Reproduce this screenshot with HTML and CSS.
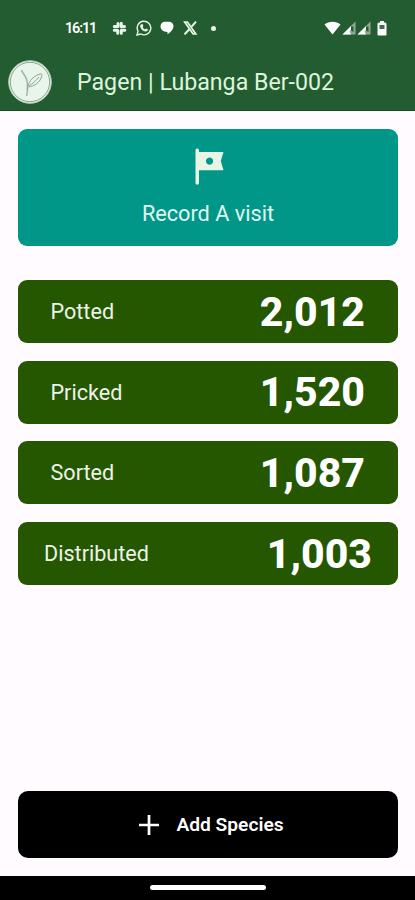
FILE: index.html
```html
<!DOCTYPE html>
<html lang="en">
<head>
  <meta charset="UTF-8" />
  <meta name="viewport" content="width=device-width, initial-scale=1.0"/>
  <title>Pagen | Lubanga Ber-002</title>
  <link rel="stylesheet" href="styles.css">
</head>
<body>
<header>
  <div class="status">
    <span class="time">16:11</span>
    <div class="notifications">
      <svg width="15" height="15" viewBox="0 0 15 15" fill="none" stroke="#e8f5e9" stroke-width="3" stroke-linecap="round">
        <path d="M6 2.500v2.500M2.300 5.600h3.700M9.300 2.300v3.500M9.500 5.600h3M2.300 9.200h3M5.700 9.500v2.800M9.300 9.600v2.700M9.300 9.300h3.500"/>
      </svg>
      <svg width="16" height="16" viewBox="0 0 16 16">
        <path d="M1 15l1-3.800A6.800 6.800 0 1 1 4.800 14z" fill="none" stroke="#e8f5e9" stroke-width="1.400"/>
        <path d="M5.400 4.200l1.200-.1.8 2-.8 1c.6 1.200 1.300 1.800 2.400 2.300l.9-1 2 .9c0 1.600-1 2.200-2.200 2.200-2.600-.2-5.400-3-5.500-5.300 0-.9.5-1.700 1.200-2z" fill="#e8f5e9"/>
      </svg>
      <svg width="14" height="14" viewBox="0 0 14 14" fill="#fff">
        <path d="M5 .8h4a4.500 4.500 0 0 1 4.500 4.500c0 3-2.500 5.700-6 8v-2.300C3 11 .5 8.500 .5 5.300A4.500 4.500 0 0 1 5 .8z"/>
      </svg>
      <svg width="15" height="14" viewBox="0 0 15 14" fill="none" stroke="#e8f5e9">
        <path d="M1.700 1h2.700l8.400 12h-2.700z" stroke-width="1.700"/>
        <path d="M13 .7L8.600 5.700M6.300 8.200L1.500 13.400" stroke-width="2"/>
      </svg>
      <span class="dot"></span>
    </div>
    <div class="signals">
      <svg width="17" height="14" viewBox="0 0 17 14" fill="#fff"><path d="M.5 3.500C5-.2 12-.2 16.500 3.500L8.500 13.500z"/></svg>
      <svg width="14" height="14" viewBox="0 0 14 14"><path d="M.5 13.500L13.500.5v13z" fill="#8fac93"/><path d="M.5 13.500L9 5v3.500l-1.500 2 1.500 3z" fill="#fff"/><path d="M9 5.500h2.500V11L9 9.500z" fill="#245c32"/></svg>
      <svg width="14" height="14" viewBox="0 0 14 14"><path d="M.5 13.500L13.500.5v13z" fill="#8fac93"/><path d="M.5 13.500L9 5v3.500l-1.500 2 1.500 3z" fill="#fff"/><path d="M9 5.500h2.500V11L9 9.500z" fill="#245c32"/></svg>
      <svg class="battery" width="10" height="15" viewBox="0 0 10 15"><path d="M3 0h4v1.500h1a1.500 1.500 0 0 1 1.500 1.500v10.500a1 1 0 0 1-1 1h-7a1 1 0 0 1-1-1V3A1.500 1.500 0 0 1 2 1.500h1z" fill="#fff"/><path d="M2.500 4h5v4h-5z" fill="#3c6e48"/></svg>
    </div>
  </div>
  <div class="title-bar">
    <svg class="logo" width="44" height="44" viewBox="0 0 44 44" fill="none">
      <circle cx="22" cy="22" r="21.300" fill="#e9f5ea" stroke="#b5cdb8"/>
      <circle cx="22" cy="22" r="19.700" stroke="#7d9c83" stroke-width=".9"/>
      <path d="M13.500 10c1 4 5 6 5.500 11 .4 5 1.500 8-.3 15" stroke="#a3b5a6" stroke-width="1.500"/>
      <path d="M19 30c1-7 4-13 13-16 2-.5 2.500 1 1.500 3-2 6-7 9-13 10M20.500 26c4-2 7-5 10.500-9" stroke="#8ca392" stroke-width="1"/>
    </svg>
    <h1>Pagen | Lubanga Ber-002</h1>
  </div>
</header>
<main>
  <div class="visit">
    <svg width="30" height="38" viewBox="0 0 30 38" fill="#e8f5e4">
      <path fill-rule="evenodd" d="M2.200.500A1.700 1.700 0 0 1 4 2.200V4h24.500l-2.700 9 2.700 9.200H4V35a1.700 1.700 0 0 1-3.500 0V2.200A1.700 1.700 0 0 1 2.200.500zM14.500 9.500a3.600 3.600 0 1 0 .1 0z"/>
    </svg>
    <span>Record A visit</span>
  </div>
  <div class="stats">
    <div class="stat"><span>Potted</span><strong>2,012</strong></div>
    <div class="stat"><span>Pricked</span><strong>1,520</strong></div>
    <div class="stat"><span>Sorted</span><strong>1,087</strong></div>
    <div class="stat wide"><span>Distributed</span><strong>1,003</strong></div>
  </div>
  <div class="add">
    <svg width="20" height="20" viewBox="0 0 20 20" stroke="#fff" stroke-width="2.700"><path d="M10 0v20M0 10h20"/></svg>
    <span>Add Species</span>
  </div>
</main>
<footer><div class="handle"></div></footer>
</body>
</html>
```

FILE: styles.css
```css
body {
  margin: 0;
  height: 900px;
  display: flex;
  flex-direction: column;
  font-family: Roboto, sans-serif;
  background: #fffbff;
  color: #fff;
  overflow: hidden;
}
header {
  height: 111px;
  box-sizing: border-box;
  background: #245c32;
  border-bottom: 1px solid #12491d;
}
.status {
  display: flex;
  align-items: center;
  height: 56px;
  padding: 0 28px 0 65px;
}
.time {
  width: 47px;
  font-size: 14.5px;
  font-weight: 600;
  letter-spacing: -1.2px;
}
.notifications {
  display: flex;
  align-items: center;
  gap: 8.5px;
}
.dot {
  width: 5px;
  height: 5px;
  margin-left: 5px;
  border-radius: 50%;
  background: #e8f5e9;
}
.signals {
  display: flex;
  align-items: center;
  gap: 1px;
  margin-left: auto;
}
.battery {
  margin-left: 5px;
}
.title-bar {
  display: flex;
  align-items: center;
  height: 52px;
  padding-left: 8px;
}
h1 {
  margin: 0 0 0 25px;
  font-size: 23.2px;
  font-weight: 400;
  color: #dcf5dc;
  white-space: nowrap;
}
main {
  flex: 1;
  display: flex;
  flex-direction: column;
  padding: 18px 17px 18px 18px;
}
.visit {
  height: 117px;
  box-sizing: border-box;
  display: flex;
  flex-direction: column;
  align-items: center;
  padding-top: 19px;
  border-radius: 9px;
  background: #009688;
}
.visit svg {
  margin-left: 4px;
}
.visit span {
  margin-top: 15px;
  font-size: 21.7px;
  line-height: 26px;
  color: #e0f7f0;
}
.stats {
  display: flex;
  flex-direction: column;
  gap: 17.7px;
  margin-top: 34px;
}
.stat {
  display: flex;
  align-items: center;
  justify-content: space-between;
  height: 63px;
  box-sizing: border-box;
  padding: 0 33px 0 32.5px;
  border-radius: 9px;
  background: #245700;
}
.wide {
  padding: 0 26px;
}
.stat span {
  font-size: 21.6px;
  color: #edf3e9;
}
.stat strong {
  font-size: 41px;
  font-weight: 800;
}
.add {
  display: flex;
  align-items: center;
  justify-content: center;
  gap: 17px;
  height: 67px;
  margin-top: auto;
  padding-right: 7px;
  padding-left: 14px;
  border-radius: 10px;
  background: #000;
  font-size: 19.2px;
  font-weight: 600;
}
footer {
  display: flex;
  justify-content: center;
  height: 24px;
  background: #000;
}
.handle {
  width: 116px;
  height: 5px;
  margin-top: 9px;
  border-radius: 3px;
  background: #fff;
}
```
